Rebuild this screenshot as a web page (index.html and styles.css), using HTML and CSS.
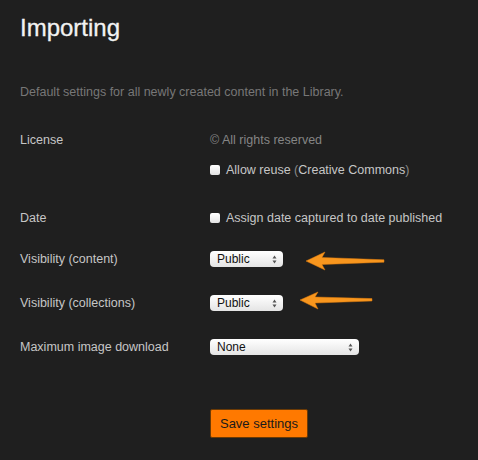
FILE: index.html
```html
<!DOCTYPE html>
<html lang="en">
<head>
  <meta charset="UTF-8" />
  <meta name="viewport" content="width=device-width, initial-scale=1.0" />
  <title>Importing</title>
  <link rel="stylesheet" href="styles.css">
</head>
<body>
  <div class="page">
    <h1>Importing</h1>
    <p class="intro">Default settings for all newly created content in the Library.</p>

    <div class="row gap-l">
      <div class="label">License</div>
      <div class="value muted">&copy; All rights reserved</div>
    </div>
    <div class="row gap-s">
      <div class="label"></div>
      <div class="value"><span class="check"></span><span>Allow reuse <span class="paren">(</span>Creative Commons<span class="paren">)</span></span></div>
    </div>

    <div class="row gap-l">
      <div class="label">Date</div>
      <div class="value"><span class="check"></span><span>Assign date captured to date published</span></div>
    </div>

    <div class="row gap-m">
      <div class="label">Visibility (content)</div>
      <div class="value"><div class="select">Public<svg class="spin" width="5" height="9" viewBox="0 0 5 9"><path d="M2.5 0.5 L4.5 3.5 L0.5 3.5 Z M2.5 8.5 L4.5 5.5 L0.5 5.5 Z" fill="#555"/></svg></div></div>
    </div>

    <div class="row gap-m2">
      <div class="label">Visibility (collections)</div>
      <div class="value"><div class="select">Public<svg class="spin" width="5" height="9" viewBox="0 0 5 9"><path d="M2.5 0.5 L4.5 3.5 L0.5 3.5 Z M2.5 8.5 L4.5 5.5 L0.5 5.5 Z" fill="#555"/></svg></div></div>
    </div>

    <div class="row gap-m2">
      <div class="label">Maximum image download</div>
      <div class="value"><div class="select wide">None<svg class="spin" width="5" height="9" viewBox="0 0 5 9"><path d="M2.5 0.5 L4.5 3.5 L0.5 3.5 Z M2.5 8.5 L4.5 5.5 L0.5 5.5 Z" fill="#555"/></svg></div></div>
    </div>

    <div class="row gap-xl">
      <div class="label"></div>
      <div class="value"><button class="save">Save settings</button></div>
    </div>

    <!-- annotation arrows -->
    <svg class="arrow arrow-1" width="82" height="22" viewBox="0 0 82 22">
      <path d="M1 10 L20 1 L17 6.5 L79 8.8 L79 11.2 L17 13.5 L20 19 Z" fill="#f8961e" stroke="#e07d0c" stroke-width="0.5"/>
    </svg>
    <svg class="arrow arrow-2" width="76" height="22" viewBox="0 0 76 22">
      <path d="M1 9 L19 1 L16 6 L73 7.6 L73 10 L16 12 L19 18 Z" fill="#f8961e" stroke="#e07d0c" stroke-width="0.5"/>
    </svg>
  </div>
</body>
</html>
```

FILE: styles.css
```css
body {
  margin: 0;
  background: #1f1f1f;
  color: #c6c6c6;
  font-family: "Liberation Sans", Arial, sans-serif;
  font-size: 12.5px;
}
.page {
  position: relative;
  padding: 0 20px;
  height: 460px;
  box-sizing: border-box;
  overflow: hidden;
}
h1 {
  margin: 14px 0 0;
  font-size: 24px;
  line-height: 28px;
  font-weight: normal;
  color: #f2f2f2;
  -webkit-text-stroke: 0.3px #f2f2f2;
}
.intro {
  margin: 42px 0 0;
  line-height: 16px;
  color: #777;
}
.row {
  display: flex;
  align-items: center;
  min-height: 16px;
  line-height: 16px;
}
.gap-s { margin-top: 14px; }
.gap-m { margin-top: 25px; }
.gap-m2 { margin-top: 28px; }
.gap-l { margin-top: 32px; }
.gap-xl { margin-top: 54px; }
.label {
  width: 190px;
  flex-shrink: 0;
}
.value {
  display: flex;
  align-items: center;
}
.muted {
  color: #858585;
}
.paren {
  color: #8a8a8a;
}
.check {
  width: 10px;
  height: 10px;
  margin-right: 6px;
  border-radius: 2px;
  background: linear-gradient(#ffffff, #e2e2e2);
}
.select {
  position: relative;
  width: 66px;
  height: 16px;
  padding-left: 7px;
  border-radius: 4px;
  background: linear-gradient(#ffffff, #f2f2f2 50%, #e4e4e4);
  color: #111;
  font-size: 12px;
  line-height: 16px;
}
.select.wide {
  width: 142px;
}
.spin {
  position: absolute;
  right: 6px;
  top: 4px;
}
.save {
  width: 98px;
  height: 29px;
  padding: 0;
  border: 1px solid #6b3a05;
  border-radius: 2px;
  background: #ff7900;
  color: #1a1a1a;
  font-family: "Liberation Sans", Arial, sans-serif;
  font-size: 13px;
}
.arrow {
  position: absolute;
}
.arrow-1 {
  left: 305px;
  top: 251px;
}
.arrow-2 {
  left: 299px;
  top: 291px;
}
```
